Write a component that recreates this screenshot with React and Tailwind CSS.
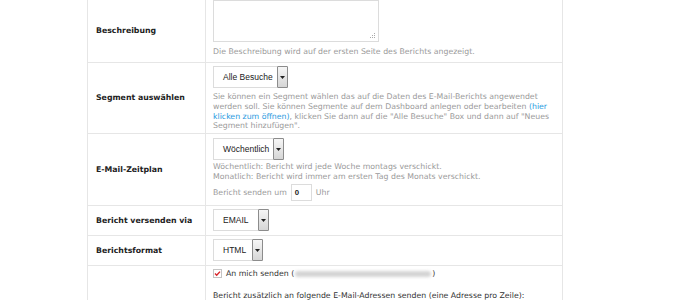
import React from "react";

const verdana = { fontFamily: '"DejaVu Sans", Verdana, sans-serif' };
const arial = { fontFamily: '"Liberation Sans", Arial, sans-serif' };

function Select({ label, width }) {
  return (
    <div
      className="flex h-[22px] items-stretch border border-[#dcdcdc] bg-white"
      style={{ width }}
    >
      <div
        className="flex flex-1 items-center pl-[9px] text-[8.5px] text-[#222]"
        style={arial}
      >
        {label}
      </div>
      <div className="-my-px -mr-px flex w-[11px] items-center justify-center rounded-[1px] border border-[#8c8c8c] bg-gradient-to-b from-[#f6f6f6] to-[#d6d6d6]">
        <svg width="5" height="3" viewBox="0 0 5 3">
          <path d="M0 0h5L2.5 3z" fill="#222" />
        </svg>
      </div>
    </div>
  );
}

function Row({ label, children, className = "" }) {
  return (
    <div className={"flex border-b border-[#e6e6e6] " + className}>
      <div
        className="flex w-[118px] shrink-0 items-center border-r border-[#e6e6e6] pl-[8px] text-[7.8px] font-bold text-[#222]"
        style={verdana}
      >
        {label}
      </div>
      <div className="flex-1 pl-[7px] pr-[6px]">{children}</div>
    </div>
  );
}

export default function App() {
  return (
    <div className="h-[300px] w-[700px] overflow-hidden bg-white" style={verdana}>
      <div className="ml-[87px] w-[476px] border-x border-[#e6e6e6]">
        <Row label="Beschreibung" className="h-[63px]">
          <div className="flex h-full flex-col justify-end pb-[5px]">
            <div className="relative h-[50px] w-[166px] border border-[#dcdcdc] bg-white">
              <svg className="absolute bottom-[2px] right-[2px]" width="6" height="6" viewBox="0 0 6 6">
                <rect x="4" y="0" width="1" height="1" fill="#aaa" />
                <rect x="2" y="2" width="1" height="1" fill="#aaa" />
                <rect x="4" y="2" width="1" height="1" fill="#aaa" />
                <rect x="0" y="4" width="1" height="1" fill="#aaa" />
                <rect x="2" y="4" width="1" height="1" fill="#aaa" />
                <rect x="4" y="4" width="1" height="1" fill="#aaa" />
              </svg>
            </div>
            <p className="mt-[5px] text-[7.8px] leading-[10px] text-[#9a9a9a]">
              Die Beschreibung wird auf der ersten Seite des Berichts angezeigt.
            </p>
          </div>
        </Row>

        <Row label="Segment auswählen" className="h-[71px]">
          <div className="pt-[3px]">
            <Select label="Alle Besuche" width="75px" />
            <p className="mt-[4px] text-[7.8px] leading-[9.8px] text-[#9a9a9a]">
              Sie können ein Segment wählen das auf die Daten des E-Mail-Berichts angewendet
              werden soll. Sie können Segmente auf dem Dashboard anlegen oder bearbeiten{" "}
              <span className="text-[#2a9ae0]">(hier klicken zum öffnen)</span>, klicken Sie
              dann auf die "Alle Besuche" Box und dann auf "Neues Segment hinzufügen".
            </p>
          </div>
        </Row>

        <Row label="E-Mail-Zeitplan" className="h-[72px]">
          <div className="pt-[4px]">
            <Select label="Wöchentlich" width="71px" />
            <p className="mt-[2px] text-[7.8px] leading-[10px] text-[#9a9a9a]">
              Wöchentlich: Bericht wird jede Woche montags verschickt.
              <br />
              Monatlich: Bericht wird immer am ersten Tag des Monats verschickt.
            </p>
            <div className="mt-[2px] flex items-center text-[7.8px] text-[#9a9a9a]">
              <span>Bericht senden um</span>
              <div className="mx-[4px] flex h-[17px] w-[21px] items-center border border-[#dcdcdc] pl-[3px] font-bold text-[#222]" style={arial}>
                0
              </div>
              <span>Uhr</span>
            </div>
          </div>
        </Row>

        <Row label="Bericht versenden via" className="h-[30px]">
          <div className="pt-[3px]">
            <Select label="EMAIL" width="56px" />
          </div>
        </Row>

        <Row label="Berichtsformat" className="h-[30px]">
          <div className="pt-[3px]">
            <Select label="HTML" width="50px" />
          </div>
        </Row>

        <div className="flex h-[60px]">
          <div className="w-[118px] shrink-0 border-r border-[#e6e6e6]" />
          <div className="flex-1 pl-[7px] pt-[2px] text-[7.8px] text-[#333]">
            <div className="flex h-[11px] items-center">
              <svg width="9" height="9" viewBox="0 0 9 9" className="mr-[4px]">
                <rect x="0.5" y="0.5" width="8" height="8" fill="#fff" stroke="#c4c4c4" />
                <path d="M2 4.6l1.7 1.7L7 2.6" fill="none" stroke="#d8252b" strokeWidth="1.4" />
              </svg>
              <span>An mich senden (</span>
              <div className="mx-[1px] h-[6px] w-[136px] rounded-full bg-[#d4d4d4] blur-[1.5px]" />
              <span>)</span>
            </div>
            <p className="mt-[11px]">
              Bericht zusätzlich an folgende E-Mail-Adressen senden (eine Adresse pro Zeile):
            </p>
          </div>
        </div>
      </div>
    </div>
  );
}
